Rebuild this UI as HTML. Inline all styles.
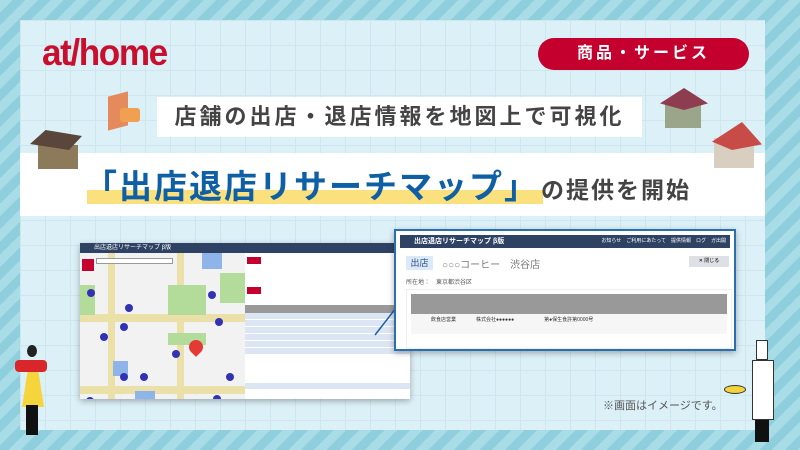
<!DOCTYPE html>
<html><head><meta charset="utf-8"><style>
*{margin:0;padding:0;box-sizing:border-box}
body{width:800px;height:450px;overflow:hidden;position:relative;font-family:"Liberation Sans","Noto Sans CJK JP",sans-serif;background:repeating-linear-gradient(135deg,#a8dce7 0 9px,#8fcfdd 9px 18px)}
.inner{position:absolute;left:20px;top:20px;width:745px;height:410px;background-color:#dcf0f7;background-image:linear-gradient(#cfe6ee 1px,transparent 1px),linear-gradient(90deg,#cfe6ee 1px,transparent 1px);background-size:25px 25px}
.band{position:absolute;left:20px;top:153px;width:745px;height:63px;background:#fff}
.abs{position:absolute}
.logo{left:42px;top:32px;font-size:37px;font-weight:bold;color:#c8102e;letter-spacing:-1.5px;transform:scaleX(.95);transform-origin:left}
.tag{left:538px;top:38px;width:211px;height:32px;border-radius:16px;background:#c4002f;color:#fff;font-weight:bold;font-size:16px;text-align:center;line-height:32px;letter-spacing:3px}
.subt{left:157px;top:97px;width:485px;height:40px;line-height:40px;text-align:center;font-size:22px;color:#444;font-weight:bold;background:#fff;letter-spacing:3px;white-space:nowrap}
.hl{left:87px;top:190px;width:456px;height:14px;background:#fbe07e}
.title{left:84px;top:160px;font-size:33px;font-weight:bold;color:#0f5fa5;letter-spacing:2px;white-space:nowrap}
.title span{font-size:23px;color:#444;letter-spacing:2px;margin-left:2px}
.win{background:#fff;box-shadow:0 2px 6px rgba(0,0,0,.3);overflow:hidden}
.hd{background:#2e4264;color:#fff;font-size:6px;padding-left:14px}
.row{height:7px;border-bottom:1px solid #fff;background:#dbe5f3}
.dot{position:absolute;width:8px;height:8px;border-radius:50%;background:#3232b4}
.note{left:603px;top:397px;font-size:11px;color:#555}
</style></head><body>
<div class="inner"></div>
<div class="band"></div>
<div class="abs logo">at/home</div>
<div class="abs tag">商品・サービス</div>
<div class="abs subt">店舗の出店・退店情報を地図上で可視化</div>
<div class="abs hl"></div>
<div class="abs title">「出店退店リサーチマップ」<span>の提供を開始</span></div>
<!-- buildings -->
<div class="abs" style="left:108px;top:94px;width:20px;height:34px;background:#e58a5c;transform:skewY(-15deg)"></div>
<div class="abs" style="left:120px;top:108px;width:20px;height:14px;background:#f0a050;border-radius:3px"></div>
<div class="abs" style="left:38px;top:145px;width:40px;height:24px;background:#8c7a5a"></div>
<div class="abs" style="left:30px;top:130px;width:52px;height:20px;background:#5a463a;clip-path:polygon(30% 0,100% 30%,75% 100%,0 70%)"></div>
<div class="abs" style="left:665px;top:100px;width:36px;height:28px;background:#9aa58a"></div>
<div class="abs" style="left:660px;top:88px;width:48px;height:22px;background:#8e3c50;clip-path:polygon(50% 0,100% 70%,50% 100%,0 70%)"></div>
<div class="abs" style="left:714px;top:138px;width:40px;height:30px;background:#d9cfc0"></div>
<div class="abs" style="left:712px;top:122px;width:50px;height:28px;background:#c74c48;clip-path:polygon(60% 0,100% 80%,40% 100%,0 70%)"></div>
<!-- left window -->
<div class="abs win" style="left:80px;top:243px;width:330px;height:156px">
 <div class="hd" style="height:10px;line-height:10px">出店退店リサーチマップ β版</div>
 <div class="abs" style="left:0;top:10px;width:165px;height:146px;background:#f2f2f2">
  <div class="abs" style="left:0;top:61px;width:165px;height:8px;background:#ebe1a8"></div>
  <div class="abs" style="left:0;top:133px;width:165px;height:8px;background:#ebe1a8"></div>
  <div class="abs" style="left:28px;top:0;width:7px;height:146px;background:#ebe1a8"></div>
  <div class="abs" style="left:97px;top:0;width:7px;height:146px;background:#ebe1a8"></div>
  <div class="abs" style="left:0;top:32px;width:15px;height:30px;background:#b3dc9a"></div>
  <div class="abs" style="left:88px;top:32px;width:38px;height:30px;background:#b3dc9a"></div>
  <div class="abs" style="left:122px;top:0;width:20px;height:16px;background:#8fb4ea"></div>
  <div class="abs" style="left:140px;top:20px;width:25px;height:30px;background:#b3dc9a"></div>
  <div class="abs" style="left:88px;top:80px;width:38px;height:12px;background:#b3dc9a"></div>
  <div class="abs" style="left:33px;top:108px;width:15px;height:15px;background:#8fb4ea"></div>
  <div class="abs" style="left:55px;top:138px;width:20px;height:8px;background:#8fb4ea"></div>
  <div class="abs" style="left:2px;top:6px;width:12px;height:12px;background:#c4002f"></div>
  <div class="abs" style="left:16px;top:5px;width:77px;height:6px;border:1px solid #999;background:#fff"></div>
  <div class="dot" style="left:7px;top:36px"></div><div class="dot" style="left:45px;top:51px"></div>
  <div class="dot" style="left:40px;top:70px"></div><div class="dot" style="left:20px;top:80px"></div>
  <div class="dot" style="left:128px;top:38px"></div><div class="dot" style="left:135px;top:65px"></div>
  <div class="dot" style="left:92px;top:97px"></div><div class="dot" style="left:40px;top:120px"></div>
  <div class="dot" style="left:60px;top:120px"></div><div class="dot" style="left:146px;top:120px"></div>
  <div class="dot" style="left:6px;top:144px"></div><div class="dot" style="left:133px;top:142px"></div>
  <div class="abs" style="left:109px;top:87px;width:14px;height:14px;border-radius:50% 50% 50% 0;transform:rotate(-45deg);background:#e53935"></div>
 </div>
 <div class="abs" style="left:165px;top:10px;width:165px;height:146px;background:#fff">
  <div class="abs" style="left:2px;top:4px;width:14px;height:7px;background:#c4002f"></div>
  <div class="abs" style="left:2px;top:34px;width:14px;height:7px;background:#c4002f"></div>
  <div class="abs" style="left:0;top:52px;width:165px;height:8px;background:#999"></div>
  <div class="abs" style="left:0;top:60px;width:165px">
   <div class="row"></div><div class="row"></div><div class="row"></div><div class="row"></div><div class="row"></div><div class="row"></div>
   <div class="row" style="background:#fff"></div><div class="row" style="background:#fff"></div><div class="row" style="background:#fff"></div><div class="row" style="background:#fff"></div><div class="row"></div>
  </div>
 </div>
</div>
<svg class="abs" style="left:370px;top:300px" width="30" height="40"><line x1="5" y1="35" x2="26" y2="8" stroke="#1d5fa0" stroke-width="1.5"/></svg>
<!-- popup -->
<div class="abs win" style="left:394px;top:229px;width:342px;height:122px;border:2px solid #2a6fae">
 <div class="hd" style="margin:4px 4px 0;height:13px;line-height:13px;font-size:7px;font-weight:bold">出店退店リサーチマップ β版<span style="float:right;font-weight:normal;font-size:5px;margin-right:4px">お知らせ　ご利用にあたって　提供情報　ログ　ガ出開</span></div>
 <div class="abs" style="left:10px;top:25px;width:27px;height:14px;background:#dce9f8;font-size:9px;color:#2a4e80;text-align:center;line-height:14px">出店</div>
 <div class="abs" style="left:46px;top:25px;font-size:10px;color:#777">○○○コーヒー　渋谷店</div>
 <div class="abs" style="left:293px;top:25px;width:40px;height:11px;background:#dde0e5;font-size:5px;text-align:center;line-height:11px">✕ 閉じる</div>
 <div class="abs" style="left:10px;top:46px;font-size:6px;color:#555">所在地：　東京都渋谷区</div>
 <div class="abs" style="left:10px;top:58px;width:326px;height:60px;border:1px solid #eee">
  <div class="abs" style="left:4px;top:4px;width:316px;height:20px;background:#999"></div>
  <div class="abs" style="left:4px;top:24px;width:316px;height:20px;background:#f6f6f6;font-size:5px;color:#333;padding:2px 20px">飲食店営業　　　　株式会社●●●●●●　　　　　　第●保生食許第0000号</div>
 </div>
</div>
<!-- people -->
<div class="abs" style="left:22px;top:365px;width:22px;height:42px;background:#f5d43c;clip-path:polygon(30% 0,70% 0,100% 100%,0 100%)"></div>
<div class="abs" style="left:15px;top:360px;width:32px;height:12px;background:#d9262b;border-radius:4px"></div>
<div class="abs" style="left:27px;top:345px;width:10px;height:12px;border-radius:50%;background:#222"></div>
<div class="abs" style="left:26px;top:405px;width:12px;height:30px;background:#111"></div>
<div class="abs" style="left:752px;top:360px;width:22px;height:60px;background:#fff;border:1px solid #333"></div>
<div class="abs" style="left:756px;top:340px;width:12px;height:20px;background:#fff;border:1px solid #333"></div>
<div class="abs" style="left:755px;top:420px;width:14px;height:22px;background:#111"></div>
<div class="abs" style="left:724px;top:385px;width:22px;height:9px;border-radius:50%;background:#f2d33a;border:1px solid #333"></div>
<div class="abs note">※画面はイメージです。</div>
</body></html>
